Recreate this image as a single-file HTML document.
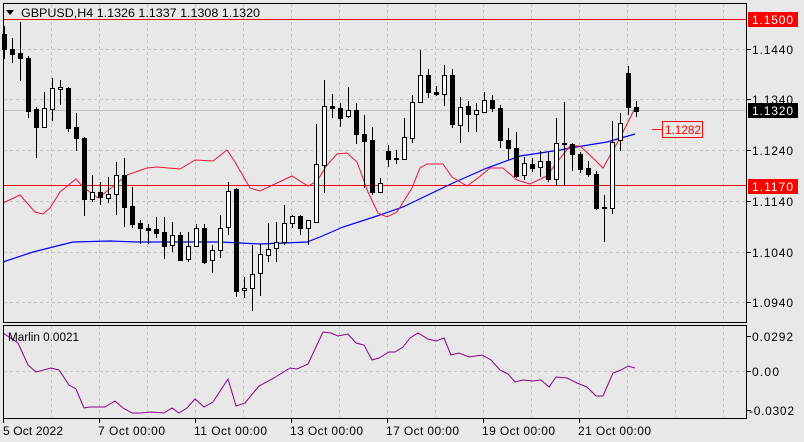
<!DOCTYPE html>
<html><head><meta charset="utf-8"><style>
html,body{margin:0;padding:0;background:#e8e8e8;}
svg{display:block;font-family:"Liberation Sans",Tahoma,sans-serif;}
</style></head><body>
<svg width="804" height="442" viewBox="0 0 804 442" xmlns="http://www.w3.org/2000/svg">
<rect width="804" height="442" fill="#e8e8e8"/>
<g stroke="#c4c4c4" stroke-dasharray="3,3" stroke-width="1">
<path d="M51.5 4V322M99.5 4V322M147.5 4V322M195.5 4V322M243.5 4V322M291.5 4V322M339.5 4V322M387.5 4V322M435.5 4V322M483.5 4V322M531.5 4V322M579.5 4V322M627.5 4V322M675.5 4V322M723.5 4V322"/>
<path d="M4 49.5H746M4 99.5H746M4 150.5H746M4 201.5H746M4 252.5H746M4 302.5H746"/>
<path d="M51.5 326V417M99.5 326V417M147.5 326V417M195.5 326V417M243.5 326V417M291.5 326V417M339.5 326V417M387.5 326V417M435.5 326V417M483.5 326V417M531.5 326V417M579.5 326V417M627.5 326V417M675.5 326V417M723.5 326V417"/>
<path d="M4 371.5H746"/>
</g>
<path d="M4 110.5H746" stroke="#c0c0c0"/>
<path d="M4 19.5H746M4 185.5H746" stroke="#ff0000"/>
<polyline fill="none" stroke="#0000ff" stroke-width="1.2" points="3,262 33,252 53,247 73,242 110,241 137,242 220,242 260,244 307,242 320,237 343,227 377,216 403,207 430,194 453,183 487,168 520,156 560,150 570,148 607,142 635,134"/>
<polyline fill="none" stroke="#e8143c" stroke-width="1" points="3,203 20,195 35,212 43,214 50,208 60,192 76,179 83,187 98,198 115,185 127,175 147,168 157,167 180,169 195,160 213,161 227,150 235,162 250,188 260,191 292,176 308,186 317,181 327,165 337,154 347,153 357,162 368,192 378,213 387,217 397,212 412,188 420,168 427,164 443,164 452,177 467,186 478,178 490,168 503,168 517,180 530,184 547,176 557,162 570,146 580,146 593,158 603,168 612,152 620,138 635,108"/>
<path stroke="#000" stroke-width="1" fill="none" d="M4.5 26V59M12.5 38V63M20.5 22V81M28.5 56V118M36.5 107V158M44.5 92V127M52.5 78V121M60.5 80V105M68.5 87V132M76.5 113V151M84.5 137V216M92.5 175V202M100.5 182V205M108.5 177V203M116.5 162V215M124.5 158V227M132.5 187V228M140.5 220V244M148.5 224V244M156.5 217V238M164.5 217V259M172.5 222V252M180.5 232V261M188.5 232V262M196.5 224V246M204.5 224V264M212.5 245V273M220.5 215V258M228.5 182V235M236.5 188V297M244.5 277V298M252.5 245V311M260.5 244V296M268.5 223V262M276.5 222V262M284.5 205V245M292.5 215V228M300.5 215V235M308.5 220V245M316.5 124V223M324.5 80V193M332.5 94V118M340.5 103V127M348.5 87V118M356.5 103V144M364.5 115V188M372.5 127V195M380.5 178V193M388.5 145V167M396.5 150V164M404.5 118V159M412.5 95V143M420.5 50V103M428.5 69V98M436.5 86V96M444.5 65V106M452.5 69V128M460.5 97V143M468.5 101V132M476.5 103V132M484.5 92V112M492.5 95V112M500.5 105V148M508.5 128V160M516.5 132V178M524.5 157V180M532.5 158V172M540.5 151V177M548.5 152V182M556.5 118V186M564.5 102V186M572.5 143V171M580.5 152V173M588.5 161V177M596.5 171V210M604.5 195V242M612.5 121V214M620.5 113V151M628.5 66V115M636.5 101V117"/>
<g stroke="#000" stroke-width="1">
<g fill="#000">
<rect x="2.5" y="34.5" width="4" height="15"/><rect x="10.5" y="49.5" width="4" height="5"/><rect x="18.5" y="53.5" width="4" height="5"/><rect x="26.5" y="58.5" width="4" height="53"/><rect x="34.5" y="109.5" width="4" height="18"/><rect x="66.5" y="88.5" width="4" height="40"/><rect x="74.5" y="127.5" width="4" height="11"/><rect x="82.5" y="138.5" width="4" height="61"/><rect x="98.5" y="192.5" width="4" height="5"/><rect x="122.5" y="175.5" width="4" height="32"/><rect x="130.5" y="206.5" width="4" height="18"/><rect x="138.5" y="223.5" width="4" height="5"/><rect x="146.5" y="228.5" width="4" height="2"/><rect x="154.5" y="229.5" width="4" height="4"/><rect x="162.5" y="232.5" width="4" height="14"/><rect x="178.5" y="235.5" width="4" height="25"/><rect x="202.5" y="228.5" width="4" height="34"/><rect x="234.5" y="189.5" width="4" height="102"/><rect x="298.5" y="216.5" width="4" height="12"/><rect x="330.5" y="106.5" width="4" height="2"/><rect x="338.5" y="108.5" width="4" height="10"/><rect x="354.5" y="110.5" width="4" height="24"/><rect x="362.5" y="134.5" width="4" height="7"/><rect x="370.5" y="140.5" width="4" height="52"/><rect x="386.5" y="151.5" width="4" height="8"/><rect x="394.5" y="158.5" width="4" height="1"/><rect x="426.5" y="75.5" width="4" height="17"/><rect x="434.5" y="92.5" width="4" height="2"/><rect x="450.5" y="75.5" width="4" height="49"/><rect x="466.5" y="106.5" width="4" height="8"/><rect x="490.5" y="100.5" width="4" height="8"/><rect x="498.5" y="108.5" width="4" height="32"/><rect x="506.5" y="140.5" width="4" height="8"/><rect x="514.5" y="148.5" width="4" height="28"/><rect x="530.5" y="164.5" width="4" height="4"/><rect x="546.5" y="161.5" width="4" height="18"/><rect x="562.5" y="143.5" width="4" height="1"/><rect x="570.5" y="144.5" width="4" height="10"/><rect x="578.5" y="154.5" width="4" height="15"/><rect x="586.5" y="168.5" width="4" height="6"/><rect x="594.5" y="174.5" width="4" height="34"/><rect x="602.5" y="207.5" width="4" height="1"/><rect x="626.5" y="73.5" width="4" height="34"/><rect x="634.5" y="107.5" width="4" height="4"/>
</g>
<g fill="#fff">
<rect x="42.5" y="108.5" width="4" height="19"/><rect x="50.5" y="88.5" width="4" height="21"/><rect x="58.5" y="87.5" width="4" height="2"/><rect x="90.5" y="192.5" width="4" height="7"/><rect x="106.5" y="194.5" width="4" height="4"/><rect x="114.5" y="175.5" width="4" height="19"/><rect x="170.5" y="235.5" width="4" height="10"/><rect x="186.5" y="246.5" width="4" height="13"/><rect x="194.5" y="228.5" width="4" height="18"/><rect x="210.5" y="250.5" width="4" height="10"/><rect x="218.5" y="228.5" width="4" height="22"/><rect x="226.5" y="191.5" width="4" height="36"/><rect x="242.5" y="288.5" width="4" height="2"/><rect x="250.5" y="274.5" width="4" height="14"/><rect x="258.5" y="254.5" width="4" height="19"/><rect x="266.5" y="249.5" width="4" height="6"/><rect x="274.5" y="242.5" width="4" height="6"/><rect x="282.5" y="223.5" width="4" height="19"/><rect x="290.5" y="216.5" width="4" height="7"/><rect x="306.5" y="220.5" width="4" height="8"/><rect x="314.5" y="164.5" width="4" height="58"/><rect x="322.5" y="106.5" width="4" height="59"/><rect x="346.5" y="110.5" width="4" height="6"/><rect x="378.5" y="183.5" width="4" height="9"/><rect x="402.5" y="137.5" width="4" height="22"/><rect x="410.5" y="102.5" width="4" height="36"/><rect x="418.5" y="75.5" width="4" height="27"/><rect x="442.5" y="75.5" width="4" height="19"/><rect x="458.5" y="107.5" width="4" height="18"/><rect x="474.5" y="110.5" width="4" height="4"/><rect x="482.5" y="100.5" width="4" height="12"/><rect x="522.5" y="163.5" width="4" height="12"/><rect x="538.5" y="161.5" width="4" height="6"/><rect x="554.5" y="143.5" width="4" height="36"/><rect x="610.5" y="142.5" width="4" height="66"/><rect x="618.5" y="123.5" width="4" height="17"/>
</g>
</g>
<polyline fill="none" stroke="#8b008b" stroke-width="1" points="3,333 18,343 28,365 36,372 51,368 59,370 69,385 76,389 84,408 90,407 105,407 115,401 123,408 132,413 141,413 151,412 164,413 172,408 179,413 187,408 195,399 204,407 213,402 228,379 236,406 245,403 259,386 274,378 290,368 297,369 308,364 323,332 331,333 338,336 348,334 356,343 364,345 372,360 379,358 389,352 395,352 403,347 410,338 418,333 428,339 436,341 444,338 451,355 459,353 469,357 482,355 491,360 500,370 508,374 515,382 523,380 533,381 541,380 549,387 556,377 567,378 577,383 587,387 596,396 603,396 613,373 621,370 628,366 635,368"/>
<g fill="none" stroke="#000" stroke-width="1">
<path d="M3.5 3.5H746.5V322.5H3.5Z"/>
<path d="M3.5 325.5H746.5V418.5H3.5Z"/>
</g>
<path stroke="#000" d="M747 49.5h4M747 99.5h4M747 150.5h4M747 201.5h4M747 252.5h4M747 302.5h4M747 336.5h4M747 371.5h4M747 410.5h4M3.5 419v4M99.5 419v4M195.5 419v4M291.5 419v4M387.5 419v4M483.5 419v4M579.5 419v4"/>
<path d="M6 10h8l-4 5z" fill="#000"/>
<text x="21" y="17" font-size="12" fill="#000" textLength="239" lengthAdjust="spacingAndGlyphs">GBPUSD,H4  1.1326 1.1337 1.1308 1.1320</text>
<g font-size="12" fill="#000" lengthAdjust="spacingAndGlyphs">
<rect x="748" y="12" width="50" height="15" fill="#ff0000"/>
<text x="752" y="24" fill="#fff" textLength="41">1.1500</text>
<text x="752" y="54" textLength="41">1.1440</text>
<text x="752" y="104" textLength="41">1.1340</text>
<rect x="748" y="103" width="50" height="15" fill="#000"/>
<text x="752" y="115" fill="#fff" textLength="41">1.1320</text>
<text x="752" y="155" textLength="41">1.1240</text>
<rect x="748" y="179" width="50" height="15" fill="#ff0000"/>
<text x="752" y="191" fill="#fff" textLength="41">1.1170</text>
<text x="752" y="206" textLength="41">1.1140</text>
<text x="752" y="257" textLength="41">1.1040</text>
<text x="752" y="307" textLength="41">1.0940</text>
<text x="752" y="341" textLength="41">0.0292</text>
<text x="752" y="376" textLength="27">0.00</text>
<text x="749" y="415" textLength="45">-0.0302</text>
</g>
<path d="M652 129.5h11" stroke="#ff0000"/>
<rect x="662.5" y="121.5" width="40" height="16" fill="#e8e8e8" stroke="#ff0000"/>
<text x="665" y="134" font-size="12" fill="#ff0000" textLength="36" lengthAdjust="spacingAndGlyphs">1.1282</text>
<text x="8" y="341" font-size="11.5" fill="#000" textLength="71" lengthAdjust="spacingAndGlyphs">Marlin 0.0021</text>
<g font-size="12" fill="#000" lengthAdjust="spacingAndGlyphs">
<text x="3" y="435" textLength="60">5 Oct 2022</text>
<text x="98" y="435" textLength="67">7 Oct 00:00</text>
<text x="194" y="435" textLength="73">11 Oct 00:00</text>
<text x="290" y="435" textLength="73">13 Oct 00:00</text>
<text x="386" y="435" textLength="73">17 Oct 00:00</text>
<text x="482" y="435" textLength="73">19 Oct 00:00</text>
<text x="578" y="435" textLength="73">21 Oct 00:00</text>
</g>
</svg>
</body></html>
